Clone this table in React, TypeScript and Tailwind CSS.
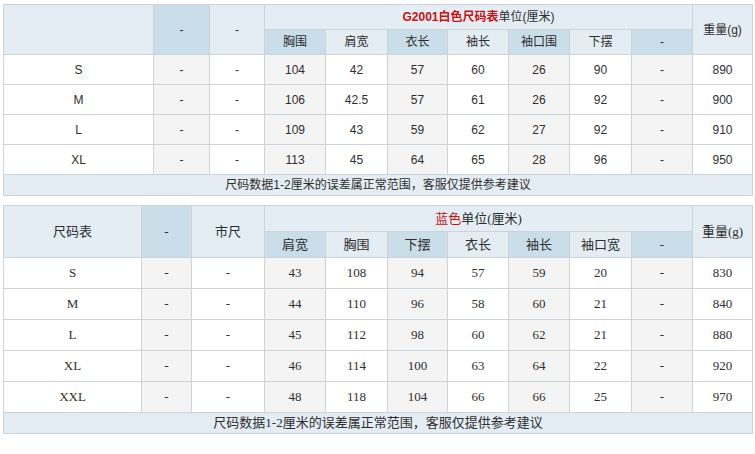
import React from "react";

const colsA = [150, 56, 55, 61, 62, 60, 61, 61, 62, 61, 60];
const colsB = [138, 50, 73, 61, 62, 60, 61, 61, 62, 61, 60];

const dark = "bg-[#cadeea]";
const light = "bg-[#e3edf3]";
const gray = "bg-[#f4f4f4]";
const white = "bg-white";

const rowsA = [
  ["S", "-", "-", "104", "42", "57", "60", "26", "90", "-", "890"],
  ["M", "-", "-", "106", "42.5", "57", "61", "26", "92", "-", "900"],
  ["L", "-", "-", "109", "43", "59", "62", "27", "92", "-", "910"],
  ["XL", "-", "-", "113", "45", "64", "65", "28", "96", "-", "950"],
];

const rowsB = [
  ["S", "-", "-", "43", "108", "94", "57", "59", "20", "-", "830"],
  ["M", "-", "-", "44", "110", "96", "58", "60", "21", "-", "840"],
  ["L", "-", "-", "45", "112", "98", "60", "62", "21", "-", "880"],
  ["XL", "-", "-", "46", "114", "100", "63", "64", "22", "-", "920"],
  ["XXL", "-", "-", "48", "118", "104", "66", "66", "25", "-", "970"],
];

const subA = ["胸围", "肩宽", "衣长", "袖长", "袖口围", "下摆", "-"];
const subB = ["肩宽", "胸围", "下摆", "衣长", "袖长", "袖口宽", "-"];

const cell = "border border-[#cdd3d6] text-center p-0";

function SizeTable({
  cols,
  first,
  third,
  title,
  subs,
  rows,
  hHead,
  hRow,
  latin,
  size,
}: {
  cols: number[];
  first: string;
  third: string;
  title: React.ReactNode;
  subs: string[];
  rows: string[][];
  hHead: string;
  hRow: string;
  latin: string;
  size: string;
}) {
  return (
    <table
      className={`border-collapse table-fixed w-[749px] text-[#2e2e2e] ${size} ${latin}`}
    >
      <colgroup>
        {cols.map((w, i) => (
          <col key={i} style={{ width: w }} />
        ))}
      </colgroup>
      <tbody>
        <tr>
          <td rowSpan={2} className={`${cell} ${light}`}>
            {first}
          </td>
          <td rowSpan={2} className={`${cell} ${dark}`}>
            -
          </td>
          <td rowSpan={2} className={`${cell} ${light}`}>
            {third}
          </td>
          <td colSpan={7} className={`${cell} ${light} ${hHead}`}>
            {title}
          </td>
          <td rowSpan={2} className={`${cell} ${light}`}>
            重量(g)
          </td>
        </tr>
        <tr>
          {subs.map((s, i) => (
            <td key={i} className={`${cell} ${hHead} ${i % 2 === 0 ? dark : light}`}>
              {s}
            </td>
          ))}
        </tr>
        {rows.map((r, ri) => (
          <tr key={ri}>
            {r.map((v, ci) => (
              <td
                key={ci}
                className={`${cell} ${hRow} ${ci % 2 === 1 ? gray : white}`}
              >
                {v}
              </td>
            ))}
          </tr>
        ))}
        <tr>
          <td colSpan={11} className={`${cell} ${light} h-[21px]`}>
            尺码数据1-2厘米的误差属正常范围，客服仅提供参考建议
          </td>
        </tr>
      </tbody>
    </table>
  );
}

export default function App() {
  return (
    <div className="w-[755px] h-[454px] bg-white pl-[3px] pt-[4px] flex flex-col gap-[9px]">
      <SizeTable
        cols={colsA}
        first=""
        third="-"
        title={
          <span>
            <b className="text-[#cc1111]">G2001白色尺码表</b>单位(厘米)
          </span>
        }
        subs={subA}
        rows={rowsA}
        hHead="h-[25px]"
        hRow="h-[30px]"
        latin="font-['Liberation_Sans','Noto_Sans_CJK_SC',sans-serif]"
        size="text-[12px]"
      />
      <SizeTable
        cols={colsB}
        first="尺码表"
        third="市尺"
        title={
          <span>
            <span className="text-[#cc1111]">蓝色</span>单位(厘米)
          </span>
        }
        subs={subB}
        rows={rowsB}
        hHead="h-[26px]"
        hRow="h-[31px]"
        latin="font-['Liberation_Serif','Noto_Sans_CJK_SC',serif]"
        size="text-[13px]"
      />
    </div>
  );
}
